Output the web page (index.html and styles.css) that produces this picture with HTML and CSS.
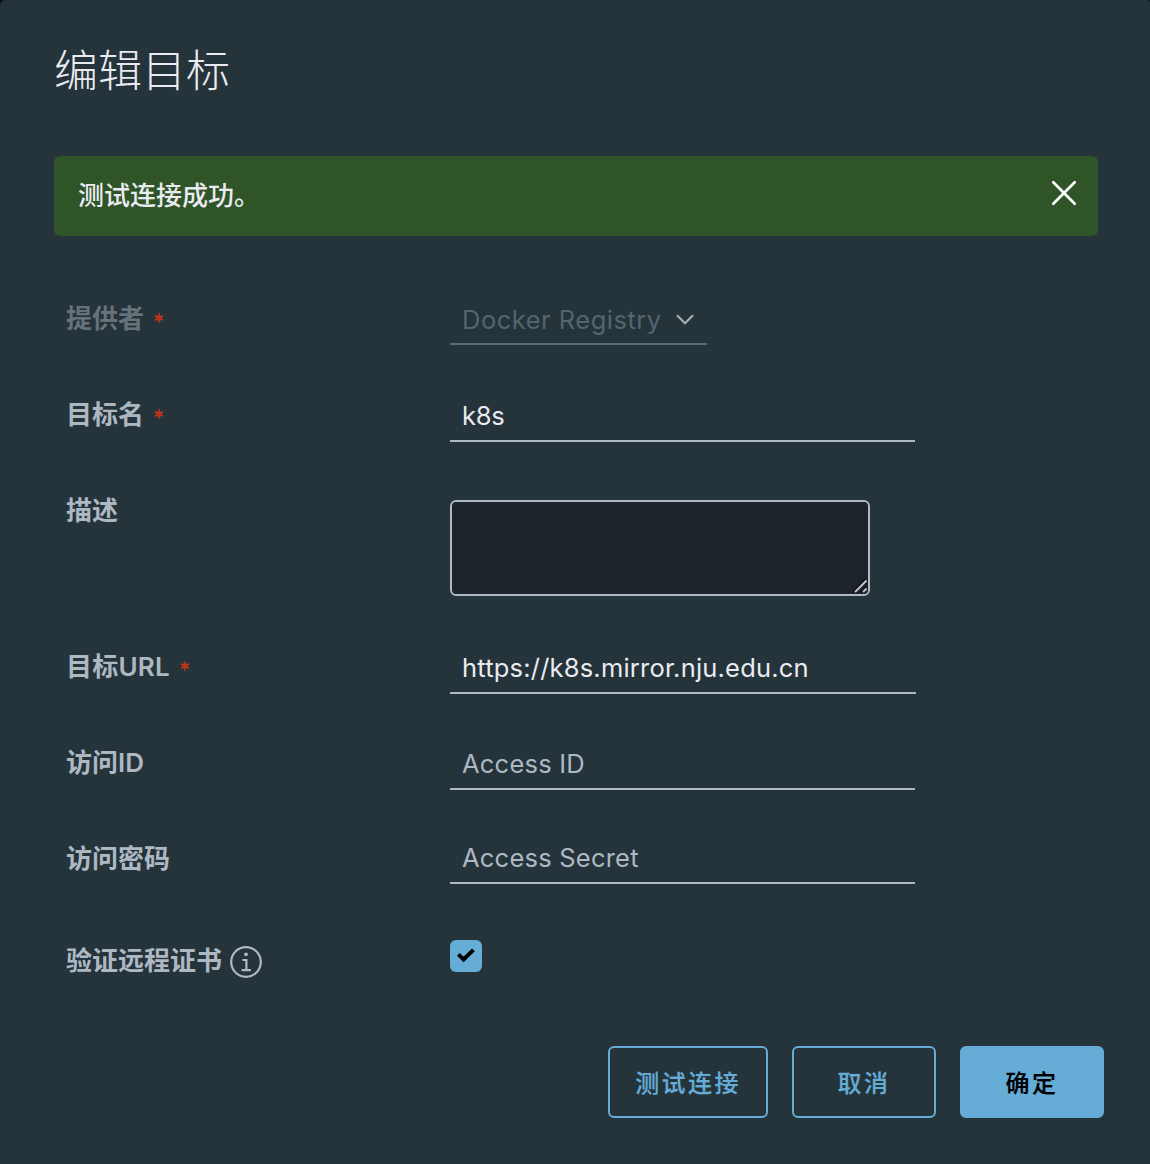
FILE: index.html
```html
<!DOCTYPE html>
<html lang="zh-CN">
<head>
<meta charset="utf-8">
<title>编辑目标</title>
<link rel="stylesheet" href="styles.css">
</head>
<body>
<main class="modal">
  <h1 class="title">编辑目标</h1>
  <div class="alert">
    <span>测试连接成功。</span>
    <button class="close" type="button" aria-label="关闭">
      <svg width="26" height="26" viewBox="0 0 26 26"><path d="M2.3 2.3 23.7 23.7M23.7 2.3 2.3 23.7"/></svg>
    </button>
  </div>
  <form class="form">
    <div class="row disabled">
      <label class="label">提供者<svg class="star" viewBox="0 0 10 10"><path d="M5 .5v9M1.1 2.8l7.8 4.4M1.1 7.2l7.8-4.4"/></svg></label>
      <div class="field select"><span class="text provider">Docker Registry</span><svg class="chevron" width="18" height="12" viewBox="0 0 18 12"><path d="M1.5 1.8 9 9.3l7.5-7.5"/></svg></div>
    </div>
    <div class="row">
      <label class="label">目标名<svg class="star" viewBox="0 0 10 10"><path d="M5 .5v9M1.1 2.8l7.8 4.4M1.1 7.2l7.8-4.4"/></svg></label>
      <div class="field"><span class="text name">k8s</span></div>
    </div>
    <div class="row tall">
      <label class="label">描述</label>
      <div class="area"><svg width="14" height="15" viewBox="0 0 14 15"><path class="grip-shade" d="M.5 13.5 13 1M8.5 14 13.5 9"/><path class="grip" d="M2 14 13.5 2.5M10 14l3.5-3.5"/></svg></div>
    </div>
    <div class="row">
      <label class="label url-label">目标URL<svg class="star" viewBox="0 0 10 10"><path d="M5 .5v9M1.1 2.8l7.8 4.4M1.1 7.2l7.8-4.4"/></svg></label>
      <div class="field wide"><span class="text url">https://k8s.mirror.nju.edu.cn</span></div>
    </div>
    <div class="row">
      <label class="label">访问ID</label>
      <div class="field"><span class="text hint access-id">Access ID</span></div>
    </div>
    <div class="row raised">
      <label class="label">访问密码</label>
      <div class="field"><span class="text hint secret">Access Secret</span></div>
    </div>
    <div class="row verify">
      <label class="label">验证远程证书<svg class="info" width="32" height="32" viewBox="0 0 32 32"><circle cx="16" cy="16" r="14.8"/><circle class="dot" cx="16" cy="8.3" r="1.9"/><path d="M12.4 14H16.4V24M11.6 24.2h9.2"/></svg></label>
      <div class="check"><svg width="20" height="16" viewBox="0 0 20 16"><path d="M2.4 7.4 7.6 12.4 17.4 2.9"/></svg></div>
    </div>
  </form>
  <footer class="actions">
    <button class="btn test" type="button">测试连接</button>
    <button class="btn" type="button">取消</button>
    <button class="btn primary" type="button">确定</button>
  </footer>
</main>
</body>
</html>
```
FILE: styles.css
```css
* { box-sizing: border-box; }
body { margin: 0; background: #0c1114; font-family: Inter, "Noto Sans CJK SC", sans-serif; }
button { font: inherit; }
svg { fill: none; flex: none; }
.modal { width: 1150px; height: 1164px; padding: 36px 46px 46px 54px; background: #25333a; border-radius: 6px 3px 0 0; display: flex; flex-direction: column; }
.title { margin: 0 0 56px; height: 64px; line-height: 64px; font-size: 44px; font-weight: 300; font-family: "Noto Sans CJK SC", sans-serif; color: #eaebf1; }
.alert { width: 1044px; height: 80px; padding: 0 21px 4px 24px; background: #2f5427; border-radius: 6px; display: flex; align-items: center; justify-content: space-between; font: 500 26px/36px "Noto Sans CJK SC", sans-serif; color: #eaebf1; }
.close { padding: 0; margin-top: -2px; border: 0; background: none; display: flex; }
.close path { stroke: #fff; stroke-width: 2.7; stroke-linecap: round; }
.form { margin: 58px 0 0 12px; display: flex; flex-direction: column; }
.row { height: 96px; display: grid; grid-template-columns: 384px 1fr; align-items: start; }
.tall { height: 156px; }
.label { height: 50px; display: flex; align-items: center; font-size: 26px; font-weight: 600; line-height: 36px; color: #adb8c3; }
.url-label { letter-spacing: .2px; }
.disabled .label { color: #667279; }
.star { width: 10px; height: 10px; margin: -3px 0 0 10px; stroke: #c23119; stroke-width: 1.9; }
.field { width: 465px; height: 48px; margin-top: 4px; padding: 0 0 2px 12px; border-bottom: 2px solid #adb9c3; display: flex; align-items: center; }
.wide { width: 466px; }
.select { width: 257px; margin-top: 3px; padding: 0 13px 0 12px; border-color: #5b6970; justify-content: space-between; }
.raised .field { margin-top: 2px; }
.text { font-size: 25.5px; line-height: 32px; color: #eaebf1; white-space: nowrap; }
.provider { color: #56656c; letter-spacing: .5px; }
.name { letter-spacing: -.2px; }
.url { letter-spacing: .2px; }
.hint { color: #adb8c3; letter-spacing: .22px; }
.chevron path { stroke: #aaaead; stroke-width: 2.1; stroke-linecap: round; }
.area { width: 420px; height: 96px; margin-top: 14px; padding: 0 1px 1px 0; border: 2px solid #adb9c3; border-radius: 6px; background: #1c232b; display: flex; align-items: flex-end; justify-content: flex-end; }
.grip-shade { stroke: #0b0d10; stroke-width: 2; }
.grip { stroke: #c0c1c0; stroke-width: 2; }
.verify .label { height: 62px; }
.info { margin: 2px 0 0 8px; stroke: #adb8c3; stroke-width: 2.2; }
.dot { fill: #adb8c3; stroke: none; }
.check { width: 32px; height: 32px; margin-top: 10px; padding-bottom: 2px; border-radius: 6px; background: #65acd6; display: flex; align-items: center; justify-content: center; }
.check path { stroke: #000; stroke-width: 4; }
.actions { margin-top: auto; display: flex; justify-content: flex-end; gap: 24px; }
.btn { width: 144px; height: 72px; padding: 0; border: 2px solid #65acd6; border-radius: 6px; background: none; color: #65acd6; font: 500 24px/32px "Noto Sans CJK SC", sans-serif; letter-spacing: 2.4px; -webkit-text-stroke: .2px; }
.test { width: 160px; }
.primary { background: #65acd6; color: #000; }
```
